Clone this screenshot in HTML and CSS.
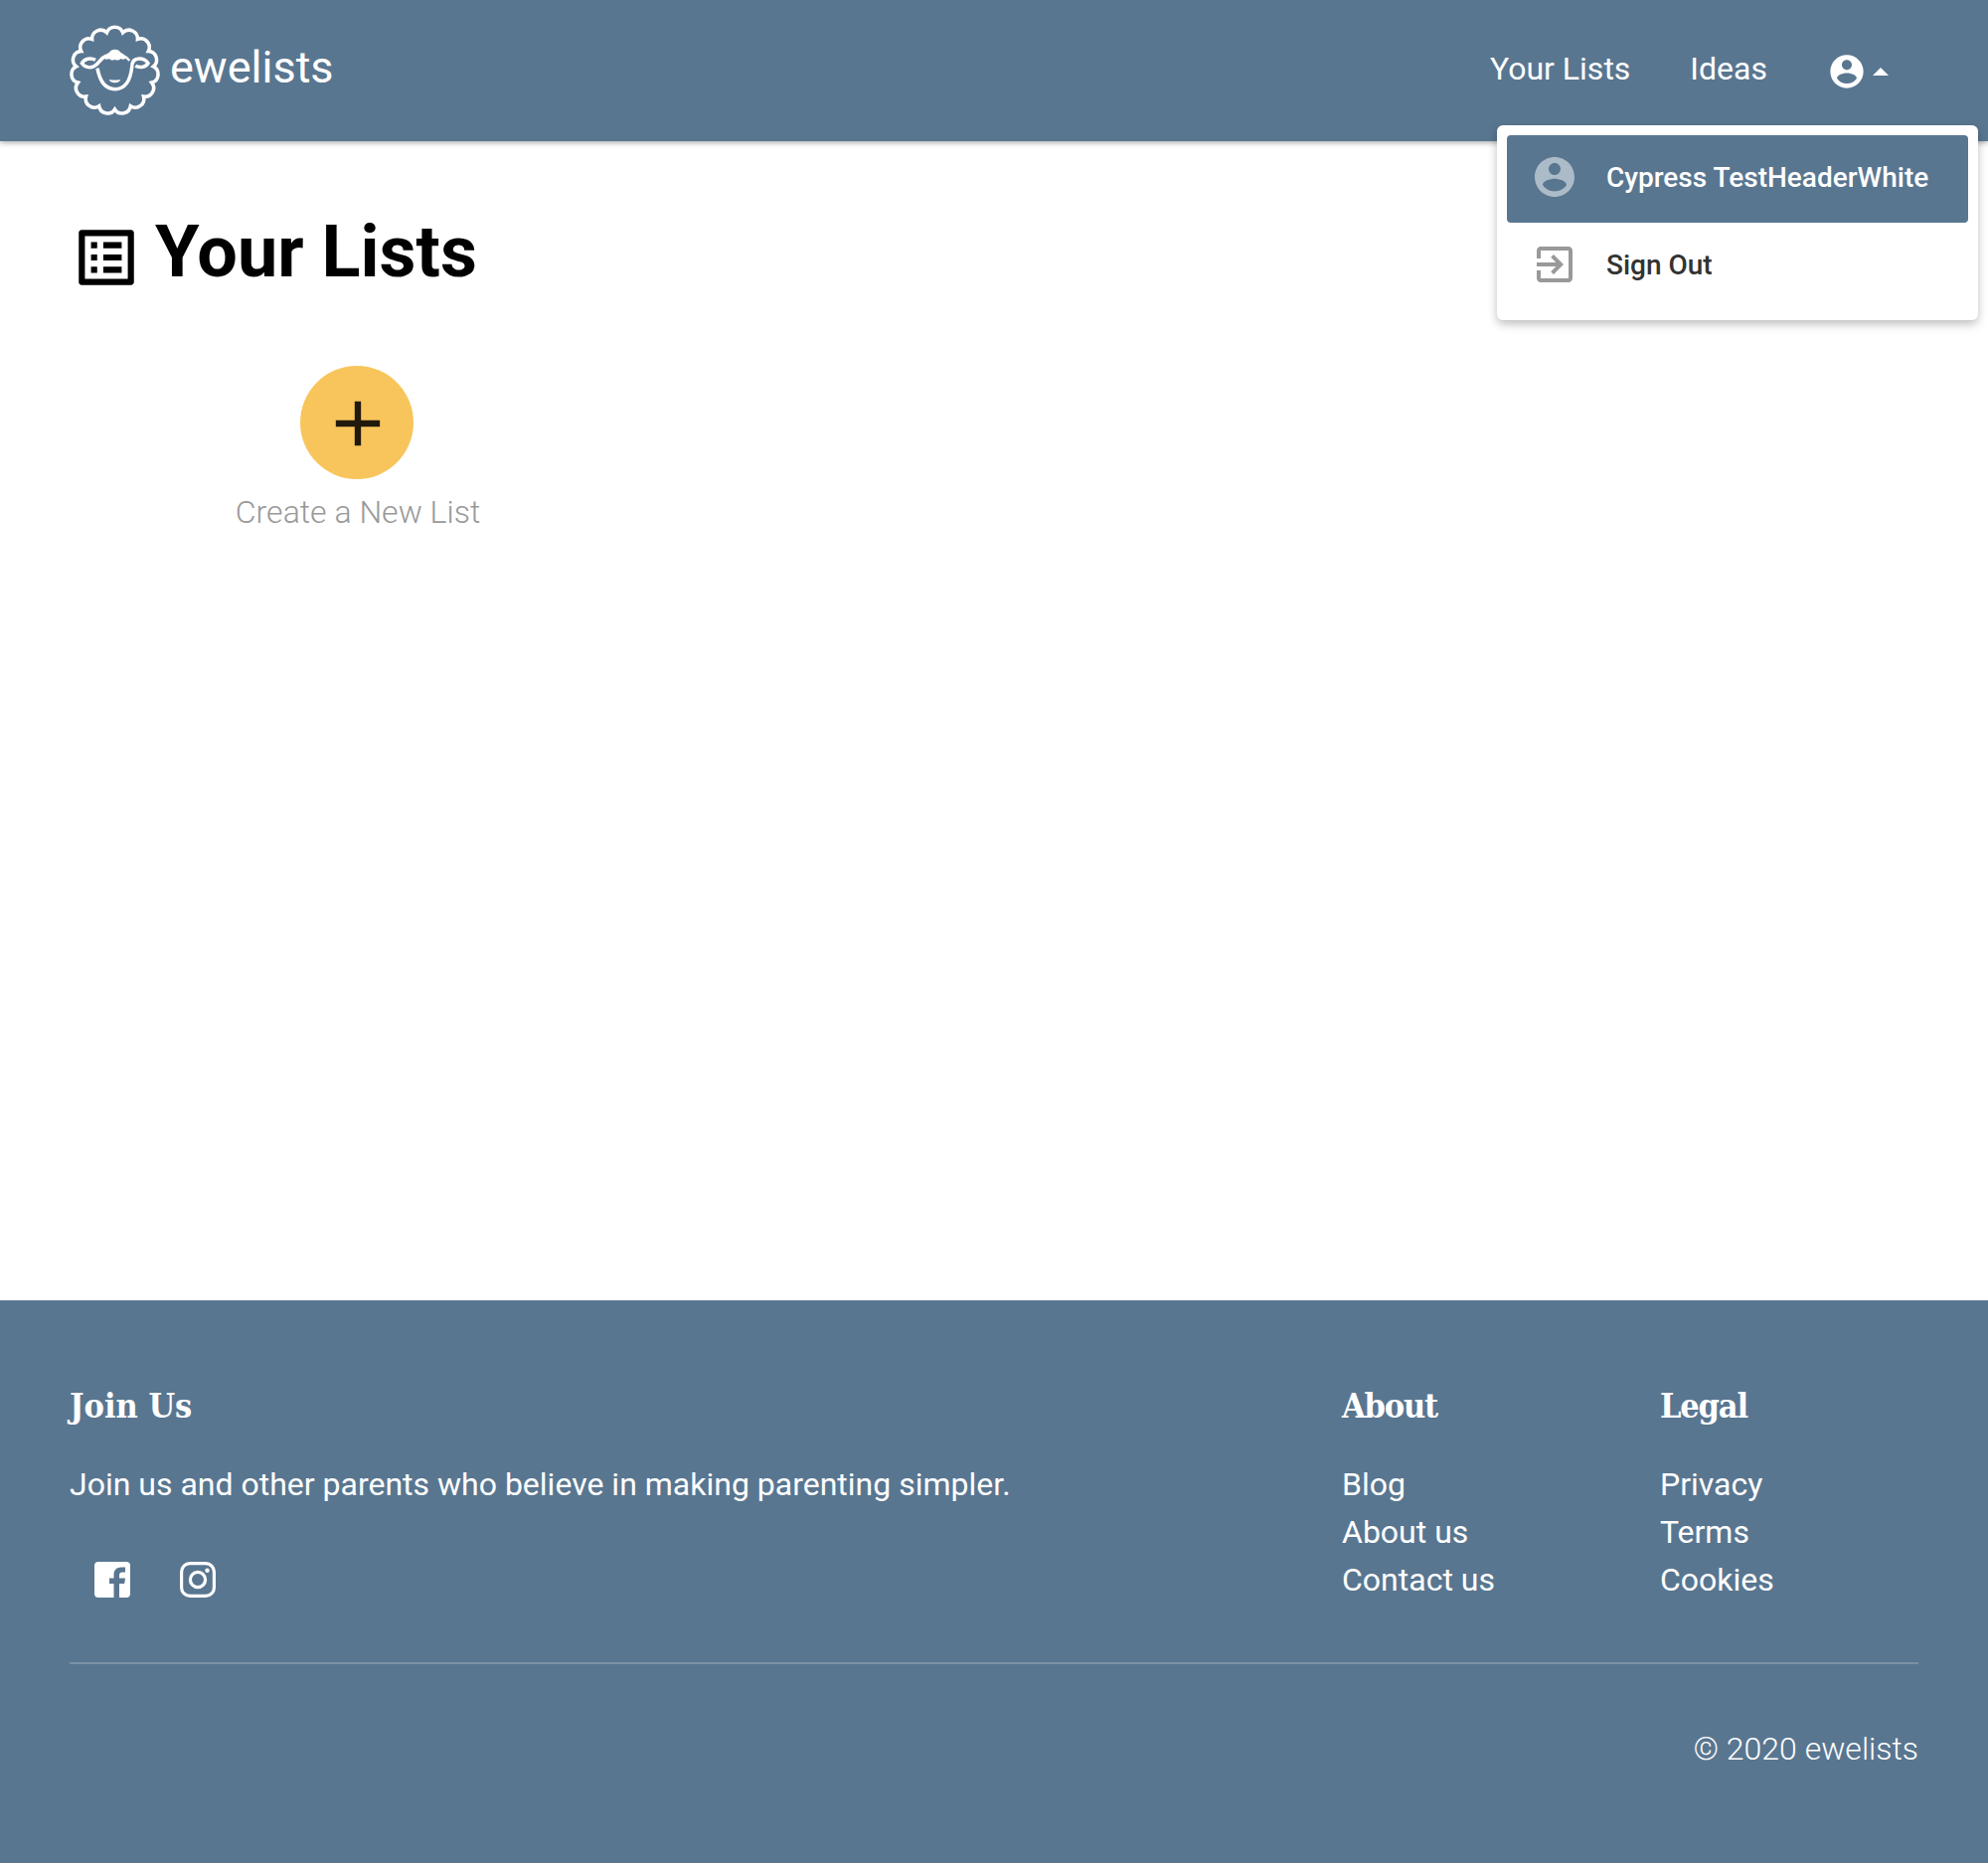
FILE: index.html
```html
<!DOCTYPE html>
<html lang="en">
<head>
<meta charset="utf-8">
<title>Your Lists - ewelists</title>
<link rel="stylesheet" href="styles.css">
</head>
<body>
<header class="header">
  <a class="brand">
    <svg class="brand-logo" viewBox="0 0 360 345" fill="none" stroke="#fff" stroke-width="10.500">
      <path d="M142.2 53.6A26 26 0 0 1 190.8 53.6A26 26 0 0 1 235.3 73.3A26 26 0 0 1 267.8 109.5A26 26 0 0 1 282.9 155.8A26 26 0 0 1 277.8 204.2A26 26 0 0 1 253.4 246.3A26 26 0 0 1 214.1 274.9A26 26 0 0 1 166.5 285A26 26 0 0 1 118.9 274.9A26 26 0 0 1 79.6 246.3A26 26 0 0 1 55.2 204.2A26 26 0 0 1 50.1 155.8A26 26 0 0 1 65.2 109.5A26 26 0 0 1 97.7 73.3A26 26 0 0 1 142.2 53.6Z"/>
      <path d="M108 136C94 128 74 132 67 146C76 160 98 162 110 151C122 139 126 129 142 123"/>
      <path d="M114 161C120 194 135 224 167 224C200 224 214 193 218 158C218 140 226 132 240 132C252 132 262 137 267 146C260 158 242 161 229 154"/>
      <path d="M190 122C199 126 205 131 211 138" stroke-width="7"/>
      <path d="M134 131C135 123 142 116 150 113C155 101 179 101 184 113C192 116 198 122 200 131C194 135 188 135 184 132C180 138 171 138 167 134C162 138 154 138 150 132C145 135 139 135 134 131Z" fill="#fff" stroke="none"/>
      <path d="M149 195Q166.500 198 184 195Q179 205 166.500 205Q154 205 149 195Z" fill="#fff" stroke="none"/>
    </svg>
    <span class="brand-name">ewelists</span>
  </a>
  <nav class="nav">
    <a class="nav-lists">Your Lists</a>
    <a class="nav-ideas">Ideas</a>
    <a class="nav-account">
      <svg class="nav-avatar" viewBox="0 0 24 24"><path d="M12 2C6.480 2 2 6.480 2 12s4.480 10 10 10 10-4.480 10-10S17.520 2 12 2zm0 3c1.660 0 3 1.340 3 3s-1.340 3-3 3-3-1.340-3-3 1.340-3 3-3zm0 14.200c-2.500 0-4.710-1.280-6-3.220.030-1.990 4-3.080 6-3.080 1.990 0 5.970 1.090 6 3.080-1.290 1.940-3.500 3.220-6 3.220z"/></svg>
      <span class="caret"></span>
    </a>
  </nav>
  <div class="menu">
    <a class="menu-item menu-item-active">
      <svg class="menu-icon" viewBox="0 0 24 24"><path d="M12 2C6.480 2 2 6.480 2 12s4.480 10 10 10 10-4.480 10-10S17.520 2 12 2zm0 3c1.660 0 3 1.340 3 3s-1.340 3-3 3-3-1.340-3-3 1.340-3 3-3zm0 14.200c-2.500 0-4.710-1.280-6-3.220.030-1.990 4-3.080 6-3.080 1.990 0 5.970 1.090 6 3.080-1.290 1.940-3.500 3.220-6 3.220z"/></svg>
      <span>Cypress TestHeaderWhite</span>
    </a>
    <a class="menu-item">
      <svg class="menu-icon" viewBox="0 0 24 24"><path d="M10.090 15.590L11.500 17l5-5-5-5-1.410 1.410L12.670 11H3v2h9.670l-2.580 2.590zM19 3H5c-1.110 0-2 .9-2 2v4h2V5h14v14H5v-4H3v4c0 1.100.89 2 2 2h14c1.100 0 2-.9 2-2V5c0-1.100-.9-2-2-2z"/></svg>
      <span>Sign Out</span>
    </a>
  </div>
</header>

<main class="main">
  <div class="title-row">
    <svg class="title-icon" viewBox="0 0 24 24"><path d="M19 5v14H5V5h14m1.100-2H3.900c-.5 0-.9.4-.9.9v16.200c0 .4.4.9.9.9h16.200c.4 0 .9-.5.9-.9V3.900c0-.5-.5-.9-.9-.9zM11 7h6v2h-6V7zm0 4h6v2h-6v-2zm0 4h6v2h-6zM7 7h2v2H7zm0 4h2v2H7zm0 4h2v2H7z"/></svg>
    <h1 class="title">Your Lists</h1>
  </div>
  <div class="create">
    <button class="create-button" aria-label="Create a new list">
      <svg class="create-plus" viewBox="0 0 24 24"><path d="M19 13h-6v6h-2v-6H5v-2h6V5h2v6h6v2z"/></svg>
    </button>
    <span class="create-label">Create a New List</span>
  </div>
</main>

<footer class="footer">
  <div class="footer-columns">
    <section>
      <h2 class="footer-title">Join Us</h2>
      <p class="footer-text">Join us and other parents who believe in making parenting simpler.</p>
      <div class="social">
        <svg class="social-icon" viewBox="0 0 36 36"><path fill="#fff" d="M4 0H32Q36 0 36 4V32Q36 36 32 36H25V22H30.200L31 16.500H25V13.500Q25 10.500 28 10.500H31V5.500H27Q19.500 5.500 19.500 13V16.500H15V22H19.500V36H4Q0 36 0 32V4Q0 0 4 0Z"/></svg>
        <svg class="social-icon" viewBox="0 0 36 36" fill="none" stroke="#fff"><rect x="1.600" y="1.600" width="32.800" height="32.800" rx="8.500" stroke-width="3.200"/><circle cx="18" cy="18" r="7.600" stroke-width="3.200"/><circle cx="27.500" cy="8.700" r="2.200" fill="#fff" stroke="none"/></svg>
      </div>
    </section>
    <section>
      <h2 class="footer-title footer-title-narrow">About</h2>
      <ul class="footer-links"><li>Blog</li><li>About us</li><li>Contact us</li></ul>
    </section>
    <section>
      <h2 class="footer-title footer-title-narrow">Legal</h2>
      <ul class="footer-links"><li>Privacy</li><li>Terms</li><li>Cookies</li></ul>
    </section>
  </div>
  <div class="copyright">© 2020 ewelists</div>
</footer>
</body>
</html>
```
FILE: styles.css
```css
* { box-sizing: border-box; }

body {
  margin: 0;
  min-height: 1874px;
  display: flex;
  flex-direction: column;
  background: #fff;
  color: #000;
  font: 400 32px/48px Roboto, "Liberation Sans", sans-serif;
}

h1, h2, p, ul { margin: 0; padding: 0; }
ul { list-style: none; }
svg { display: block; flex: none; }

.header {
  position: relative;
  height: 142px;
  padding: 0 100px 0 60px;
  display: flex;
  justify-content: space-between;
  background: #597690;
  color: #fff;
  box-shadow: 0 1px 6px rgba(0, 0, 0, .4);
}
.brand { display: flex; padding-top: 15px; }
.brand-logo { width: 120px; height: 115px; margin-right: -10px; }
.brand-name { font-size: 45px; line-height: 60px; padding: 23px 0 0 1px; }

.nav { display: flex; padding-top: 45px; }
.nav-lists { margin-right: 60px; }
.nav-ideas { margin-right: 60px; }
.nav-account { display: flex; height: 54px; align-items: center; }
.nav-avatar { width: 40px; height: 40px; fill: #fff; }
.caret {
  border: 8px solid transparent;
  border-top: 0;
  border-bottom-color: #fff;
  margin-left: 6px;
}

.menu {
  position: absolute;
  z-index: 1;
  top: 126px;
  right: 10px;
  width: 484px;
  height: 196px;
  padding: 10px;
  border-radius: 6px;
  background: #fff;
  box-shadow: 0 4px 10px rgba(0, 0, 0, .26);
}
.menu-item {
  height: 88px;
  padding: 0 24px;
  display: flex;
  align-items: center;
  gap: 28px;
  border-radius: 4px;
  color: #333;
  font-size: 28px;
  font-weight: 500;
  line-height: 40px;
  white-space: nowrap;
}
.menu-item span { padding-bottom: 3px; }
.menu-icon { width: 48px; height: 48px; margin-bottom: 4px; fill: #999; }
.menu-item-active { background: #597690; color: #fff; }
.menu-item-active .menu-icon { fill: #acbbc8; }

.main { height: 1166px; padding: 67px 70px 0; }
.title-row { display: flex; height: 159px; gap: 12px; }
.title-icon { width: 74px; height: 74px; margin-top: 13px; }
.title { padding-top: 1px; font-size: 72px; line-height: 88px; font-weight: 700; }
.create { width: 580px; display: flex; flex-direction: column; align-items: center; }
.create-button {
  width: 114px;
  height: 114px;
  padding: 2px 0 0 2px;
  margin-right: 2px;
  border: 0;
  border-radius: 50%;
  display: flex;
  align-items: center;
  justify-content: center;
  background: #f8c55c;
}
.create-plus { width: 76px; height: 76px; fill: #20190c; }
.create-label { margin-top: 9px; color: #999; font-weight: 300; }

.footer { flex: 1; padding: 80px 70px 0; background: #597690; color: #fff; }
.footer-columns {
  height: 286px;
  display: grid;
  grid-template-columns: 1280px 320px 1fr;
  border-bottom: 2px solid #7a91a6;
}
.footer-title {
  height: 81px;
  padding-top: 2px;
  font: 700 34px/48px "Roboto Slab", "DejaVu Serif Condensed", "DejaVu Serif", serif;
}
.footer-title-narrow { letter-spacing: -1.2px; }
.social { display: flex; gap: 50px; padding: 54px 0 0 25px; }
.social-icon { width: 36px; height: 36px; }
.copyright { padding-top: 61px; font-weight: 300; text-align: right; }
```
